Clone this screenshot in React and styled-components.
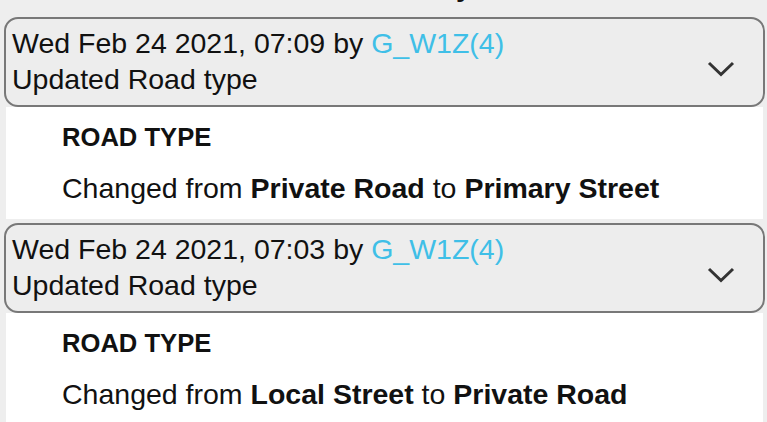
import React from 'react';
import styled, { createGlobalStyle } from 'styled-components';

const GlobalStyle = createGlobalStyle`
  body {
    margin: 0;
    background: #eeeeee;
    font-family: "Liberation Sans", Arial, sans-serif;
    color: #111;
  }
`;

const Page = styled.div`
  padding: 0 2px 0 4px;
`;

// heading above the list, scrolled mostly out of view
const Title = styled.h2`
  margin: -29px 0 14px;
  font-size: 28px;
  line-height: 32px;
  font-weight: 700;
  text-align: center;
`;

const Entry = styled.section`
  margin-bottom: 4px;
`;

const Header = styled.div`
  display: flex;
  align-items: center;
  justify-content: space-between;
  padding: 6px 28px 8px 6px;
  border: 2px solid #787878;
  border-radius: 14px;
  background: #ededed;
  cursor: pointer;
`;

const HeaderText = styled.div`
  font-size: 28.5px;
  line-height: 36px;
`;

const Author = styled.a`
  color: #3fbfe7;
  text-decoration: none;
`;

const Chevron = styled.svg`
  margin-top: 15px;
  flex-shrink: 0;
`;

const Body = styled.div`
  margin: 0 2px;
  padding: 15px 20px 13px 56px;
  background: #fff;
`;

const FieldName = styled.div`
  font-size: 25.6px;
  line-height: 30px;
  font-weight: 700;
  margin-bottom: 19px;
`;

const Change = styled.div`
  font-size: 28.5px;
  line-height: 35px;

  b {
    font-weight: 700;
  }
`;

const entries = [
  { time: '07:09', from: 'Private Road', to: 'Primary Street' },
  { time: '07:03', from: 'Local Street', to: 'Private Road' },
];

const App = () => {
  return (
    <>
      <GlobalStyle />
      <Page>
        <Title>Road History</Title>
        {entries.map((e) => (
          <Entry key={e.time}>
            <Header>
              <HeaderText>
                Wed Feb 24 2021, {e.time} by <Author href="#">G_W1Z(4)</Author>
                <br />
                Updated Road type
              </HeaderText>
              <Chevron width="28" height="16" viewBox="0 0 28 16">
                <polyline
                  points="2,2 14,13.5 26,2"
                  fill="none"
                  stroke="#333"
                  strokeWidth="3"
                />
              </Chevron>
            </Header>
            <Body>
              <FieldName>ROAD TYPE</FieldName>
              <Change>
                Changed from <b>{e.from}</b> to <b>{e.to}</b>
              </Change>
            </Body>
          </Entry>
        ))}
      </Page>
    </>
  );
};

export default App;
